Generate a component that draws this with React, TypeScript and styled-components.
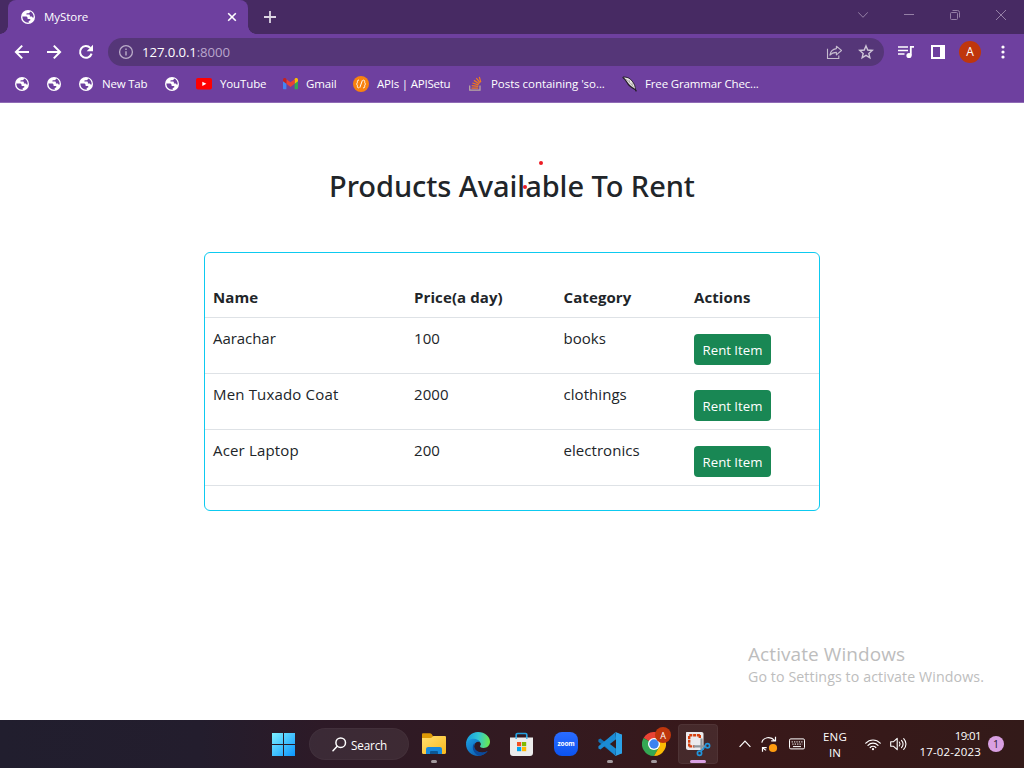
import React from "react";
import styled, { createGlobalStyle } from "styled-components";

const GlobalStyle = createGlobalStyle`
  *, *::before, *::after { box-sizing: border-box; }
  html, body { margin: 0; padding: 0; overflow: hidden; }
  body { font-family: "Open Sans", "Noto Sans", sans-serif; background: #fff; }
  svg { display: block; flex: none; }
`;

const Desktop = styled.div`
  position: relative;
  width: 1024px;
  height: 768px;
  display: flex;
  flex-direction: column;
  overflow: hidden;
`;

/* ---------- Browser chrome ---------- */

const Browser = styled.header`
  flex: none;
  height: 103px;
  background: #6e409f;
  border-bottom: 1px solid #8f6bb5;
  color: #fff;
`;

const TabStrip = styled.div`
  display: flex;
  height: 34px;
  padding-left: 8px;
  background: #472a63;
`;

const Tab = styled.div`
  position: relative;
  display: flex;
  align-items: center;
  width: 240px;
  padding: 0 8px 0 13px;
  border-radius: 8px 8px 0 0;
  background: #6e409f;

  &::before,
  &::after {
    content: "";
    position: absolute;
    bottom: 0;
    width: 8px;
    height: 8px;
  }
  &::before {
    left: -8px;
    background: radial-gradient(circle at 0 0, transparent 7.5px, #6e409f 8px);
  }
  &::after {
    right: -8px;
    background: radial-gradient(circle at 100% 0, transparent 7.5px, #6e409f 8px);
  }
`;

const TabTitle = styled.span`
  flex: 1;
  margin-left: 9px;
  padding-bottom: 2px;
  font-size: 11.5px;
  letter-spacing: -0.05px;
`;

const NewTabButton = styled.div`
  display: grid;
  place-items: center;
  width: 28px;
  margin-left: 8px;
`;

const WindowControls = styled.div`
  display: flex;
  height: 29px;
  margin-left: auto;
`;

const WindowButton = styled.div`
  display: grid;
  place-items: center;
  width: 46px;
`;

const Toolbar = styled.div`
  display: flex;
  align-items: center;
  height: 36px;
  padding: 0 6px;
`;

const ToolButton = styled.div`
  display: grid;
  place-items: center;
  width: 32px;
  height: 28px;
`;

const Omnibox = styled.div`
  display: flex;
  align-items: center;
  width: 776px;
  height: 28px;
  margin: 0 6px;
  padding: 0 2px 0 10px;
  border-radius: 14px;
  background: #553678;
`;

const Url = styled.span`
  flex: 1;
  margin-left: 8px;
  font-size: 13.2px;
  letter-spacing: -0.1px;
`;

const Port = styled.span`
  color: #b9a6cc;
`;

const Avatar = styled.div`
  display: grid;
  place-items: center;
  width: 22px;
  height: 22px;
  border-radius: 50%;
  background: #bf360c;
  font-size: 12px;
  line-height: 1;
`;

const BookmarkBar = styled.nav`
  display: flex;
  align-items: center;
  height: 29px;
  padding: 0 0 2px 15px;
`;

const Bookmark = styled.div<{ $width: number; $gap?: number }>`
  display: flex;
  align-items: center;
  flex: none;
  gap: ${(p) => p.$gap ?? 9}px;
  width: ${(p) => p.$width}px;
`;

const BookmarkLabel = styled.span<{ $spacing?: number }>`
  font-size: 11.5px;
  line-height: 16px;
  letter-spacing: ${(p) => p.$spacing ?? -0.12}px;
  white-space: nowrap;
`;

/* ---------- Page ---------- */

const Page = styled.main`
  position: relative;
  flex: 1;
  display: flex;
  flex-direction: column;
  align-items: center;
  background: #fff;
  color: #212529;
`;

const Title = styled.h2`
  margin: 63px 0 0;
  font: 500 29px/40px "Noto Sans", "Open Sans", sans-serif;
  letter-spacing: -0.05px;
`;

const InkDot = styled.i<{ $x: number; $y: number }>`
  position: absolute;
  left: ${(p) => p.$x}px;
  top: ${(p) => p.$y}px;
  width: 4px;
  height: 4px;
  border-radius: 50%;
  background: #ec1c24;
`;

const Card = styled.section`
  width: 616px;
  margin-top: 46px;
  padding: 24px 0;
  border: 1px solid #0dcaf0;
  border-radius: 6px;
`;

const Table = styled.table`
  width: 614px;
  table-layout: fixed;
  border-collapse: separate;
  border-spacing: 0;
  font-size: 15px;
  line-height: 24px;
`;

const Column = styled.col<{ $width: number }>`
  width: ${(p) => p.$width}px;
`;

const HeadCell = styled.th`
  height: 41px;
  padding: 8px;
  border-bottom: 1px solid #dee2e6;
  font-weight: 700;
  letter-spacing: 0.1px;
  text-align: left;
`;

const Cell = styled.td<{ $spacing?: number }>`
  height: 56px;
  padding: 8px;
  border-bottom: 1px solid #dee2e6;
  letter-spacing: ${(p) => p.$spacing ?? 0.05}px;
  vertical-align: top;
`;

const RentButton = styled.button`
  display: block;
  width: 77px;
  height: 31px;
  margin-top: 8px;
  padding: 1px 0 0;
  border: 0;
  border-radius: 4px;
  background: #198754;
  color: #fff;
  font: 400 13.2px/30px "Open Sans", sans-serif;
  letter-spacing: 0;
`;

const Watermark = styled.aside`
  position: absolute;
  left: 748px;
  top: 538px;
  color: #bdbdbd;
  white-space: nowrap;
`;

const WatermarkTitle = styled.div`
  font-size: 19px;
  line-height: 26px;
  letter-spacing: 0.08px;
`;

const WatermarkText = styled.div`
  font-size: 14.2px;
  line-height: 20px;
  letter-spacing: 0.1px;
`;

/* ---------- Taskbar ---------- */

const Taskbar = styled.footer`
  flex: none;
  display: flex;
  align-items: center;
  height: 48px;
  padding-left: 262px;
  background: linear-gradient(90deg, #211e2e 0, #231d2d 200px, #2d1a27 320px, #331a20 540px, #391819 740px, #331a19 1024px);
  color: #fff;
`;

const TaskSlot = styled.div<{ $active?: boolean }>`
  position: relative;
  display: grid;
  place-items: center;
  width: 40px;
  height: 40px;
  margin: 0 2px;
  border-radius: 4px;
  background: ${(p) => (p.$active ? "rgba(255,255,255,.075)" : "transparent")};
  box-shadow: ${(p) => (p.$active ? "inset 0 0 0 1px rgba(255,255,255,.05)" : "none")};
`;

const RunMark = styled.i<{ $active?: boolean }>`
  position: absolute;
  bottom: 1px;
  left: 50%;
  width: ${(p) => (p.$active ? 16 : 6)}px;
  height: 3px;
  border-radius: 2px;
  background: ${(p) => (p.$active ? "#d9a0e2" : "#a39a9e")};
  transform: translateX(-50%);
`;

const ProfileBadge = styled.span`
  position: absolute;
  left: 21px;
  top: 3px;
  display: grid;
  place-items: center;
  width: 16px;
  height: 16px;
  border-radius: 50%;
  background: #bf360c;
  font-size: 9px;
  line-height: 1;
`;

const SearchPill = styled.div`
  display: flex;
  align-items: center;
  gap: 4px;
  width: 100px;
  height: 32px;
  margin: 0 3px;
  padding: 1px 0 0 23px;
  border-radius: 16px;
  background: rgba(255, 255, 255, 0.07);
  box-shadow: inset 0 0 0 1px rgba(255, 255, 255, 0.03);
  font-size: 11.7px;
  letter-spacing: -0.15px;
`;

const Tray = styled.div`
  display: flex;
  align-items: center;
  margin: 0 20px 0 auto;
`;

const TrayIcon = styled.div<{ $width?: number }>`
  display: grid;
  place-items: center;
  width: ${(p) => p.$width ?? 24}px;
`;

const Language = styled.div`
  width: 44px;
  padding-top: 2px;
  font-size: 11.5px;
  line-height: 16px;
  letter-spacing: 0.15px;
  text-align: center;
`;

const Clock = styled.div`
  width: 74px;
  font-size: 11.5px;
  line-height: 16px;
  text-align: right;
`;

const Time = styled.div`
  letter-spacing: -0.6px;
`;

const DateText = styled.div`
  letter-spacing: 0.15px;
`;

const Notification = styled.div`
  width: 16px;
  height: 16px;
  margin-left: 7px;
  border-radius: 50%;
  background: #d9a0e2;
  color: #2b1a2e;
  font-size: 10.5px;
  line-height: 16px;
  text-align: center;
`;

/* ---------- Icons ---------- */

const GlobeIcon = () => (
  <svg width="14" height="14" viewBox="0 0 14 14">
    <circle cx="7" cy="7" r="7" fill="#fff" />
    <path
      d="M1.400 6.600h3.300c1.300 0 1.900.7 1.900 1.600v.7h2.100c.9 0 .9 1.300.3 1.700l-1.300.5v1.600c-3.900.1-6.400-2.500-6.300-6.100zM9 1.600c-.2.9-.5 1.600-1.600 1.600H6c-.4 0-.6.2-.6.6v.8h2.500c.8 0 1 .6 1 1.200v.8h1.500c.700 0 .9.500 1.100 1h1.200c.2-3-1.200-5.200-3.700-6z"
      fill="#6e409f"
    />
  </svg>
);

const YouTubeIcon = () => (
  <svg width="16" height="12" viewBox="0 0 16 12">
    <rect width="16" height="11.5" rx="2" fill="#f00" />
    <path d="M6.300 3.700v4.200l4.100-2.100z" fill="#fff" />
  </svg>
);

const GmailIcon = () => (
  <svg width="15" height="12" viewBox="0 0 15 12">
    <path d="M0 2.200v8.100c0 .6.400 1 1 1h2.400V4.600z" fill="#4285f4" />
    <path d="M15 2.200v8.100c0 .6-.4 1-1 1h-2.400V4.600z" fill="#34a853" />
    <path d="M11.600 1.200v4.600L15 3.300V1.900C15 .2 13.200-.4 12 .6z" fill="#fbbc04" />
    <path d="M3.400 1.200 7.500 4.300l4.100-3.100v4.600L7.500 8.900 3.400 5.800z" fill="#ea4335" />
    <path d="M0 1.900v1.400l3.400 2.500V1.200L3 .6C1.800-.4 0 .2 0 1.900z" fill="#c5221f" />
  </svg>
);

const ApiIcon = () => (
  <svg width="16" height="16" viewBox="0 0 16 16" fill="none" stroke="#fff" strokeWidth="1" strokeLinecap="round">
    <circle cx="8" cy="8" r="8" fill="#f9820f" stroke="none" />
    <path d="M5.600 4.100c-1.100 0-1.200.7-1.200 1.600 0 1.200-.1 1.800-.9 2.300.8.500.9 1.100.9 2.300 0 .9.100 1.600 1 1.600M10.600 4.100c1 0 1.100.7 1.100 1.600 0 1.200.1 1.800.9 2.300-.8.500-.9 1.100-.9 2.300 0 .9-.1 1.600-1.200 1.600M9.300 4.600 6.900 11.400" />
  </svg>
);

const StackIcon = () => (
  <svg width="13" height="15" viewBox="0 0 13 15" fill="none">
    <path d="M.7 9.600v4.500h10.300V9.600" stroke="#bcaaa4" strokeWidth="1.200" />
    <path d="M2.500 12h6.700M2.700 9.600l6.600.7M3.400 7l6.200 1.900M4.900 4.400l5.400 3.400M7.300 2.200l3.900 4.700M10.300.8l1.500 5.400" stroke="#f07a20" strokeWidth="1.250" />
  </svg>
);

const FeatherIcon = () => (
  <svg width="16" height="16" viewBox="0 0 16 16">
    <path d="M.8 1.200c2.800-.2 5.600.2 7.500 2 2.500 2.300 4.300 5.200 5 8.400l-.1 2C10.300 12 7.500 10.400 5.900 7.800 4.500 5.500 3 2.800.8 1.200z" fill="#e9e6e2" />
    <path d="M.6 1.200c2.200 1.400 3.700 4 5.200 6.400 1.900 2.900 4.800 4.500 7.600 6.100l1 1.700" stroke="#231d26" strokeWidth="1.300" fill="none" />
    <path d="M1 1c2.800-.1 5.600.5 7.400 2.200 2.500 2.300 4.300 5.200 4.900 8.400v2" stroke="#231d26" strokeWidth=".9" fill="none" />
    <path d="M4 3.200c3 2.200 6 5.400 8.600 9.400M7 3.800l.7 2.700M10 6.700l.4 3" stroke="#7d767f" strokeWidth=".5" fill="none" />
  </svg>
);

const BackIcon = () => (
  <svg width="16" height="16" viewBox="0 0 16 16" fill="none" stroke="#fff" strokeWidth="2">
    <path d="M15 8H2.500M8.200 1.600 1.900 8l6.300 6.400" />
  </svg>
);

const ForwardIcon = () => (
  <svg width="16" height="16" viewBox="0 0 16 16" fill="none" stroke="#fff" strokeWidth="2">
    <path d="M1 8h12.500M7.800 1.600 14.100 8l-6.300 6.400" />
  </svg>
);

const ReloadIcon = () => (
  <svg width="16" height="16" viewBox="0 0 16 16">
    <path d="M13.600 9.600A5.900 5.900 0 1 1 12.300 3.900" fill="none" stroke="#fff" strokeWidth="2" />
    <path d="M15 .8v6.400H8.700z" fill="#fff" />
  </svg>
);

const InfoIcon = () => (
  <svg width="16" height="16" viewBox="0 0 16 16">
    <circle cx="8" cy="8" r="6.400" fill="none" stroke="#bbadc9" strokeWidth="1.300" />
    <path d="M7.300 7.200h1.400v4.200H7.300zM7.300 4.500h1.400v1.500H7.300z" fill="#bbadc9" />
  </svg>
);

const ShareIcon = () => (
  <svg width="16" height="16" viewBox="0 0 16 16" fill="none" stroke="#c5bbce" strokeWidth="1.100">
    <path d="M1.500 4.800v9.700h11.300v-3" />
    <path d="M10.400 2.200 15.500 6.500 10.400 10.800V8.400C7.600 8.400 5.600 9.100 3.900 11.100c.5-3.500 2.700-6 6.500-6.500z" strokeLinejoin="round" />
  </svg>
);

const StarIcon = () => (
  <svg width="16" height="16" viewBox="0 0 16 16" fill="none" stroke="#cfc6d8" strokeWidth="1.400">
    <path d="m8 1.900 1.750 4.150 4.500.38-3.420 2.950 1.030 4.380L8 11.430l-3.860 2.330 1.030-4.380L1.750 6.430l4.500-.38z" />
  </svg>
);

const PlaylistIcon = () => (
  <svg width="16" height="14" viewBox="0 0 16 14" fill="none" stroke="#fff">
    <path d="M0 1.900h10M0 5.500h10M0 9.100h6.500" strokeWidth="1.500" />
    <path d="M12.800 10.500V1.900H16" strokeWidth="1.800" />
    <circle cx="11" cy="10.500" r="2.600" fill="#fff" stroke="none" />
  </svg>
);

const SidePanelIcon = () => (
  <svg width="14" height="14" viewBox="0 0 14 14">
    <path d="M0 0h14v14H0zM2 2v10h7V2z" fill="#fff" fillRule="evenodd" />
  </svg>
);

const MoreIcon = () => (
  <svg width="5" height="14" viewBox="0 0 5 14" fill="#fff">
    <circle cx="3" cy="2" r="1.600" />
    <circle cx="3" cy="7" r="1.600" />
    <circle cx="3" cy="12" r="1.600" />
  </svg>
);

const StartIcon = () => (
  <svg width="24" height="24" viewBox="0 0 24 24">
    <defs>
      <linearGradient id="start" x1="0" y1="0" x2="1" y2="1">
        <stop offset="0" stopColor="#7df0ff" />
        <stop offset="1" stopColor="#0a95ff" />
      </linearGradient>
    </defs>
    <path d="M0 1h11v11H0zM12 1h11v11H12zM0 13h11v11H0zM12 13h11v11H12z" fill="url(#start)" />
  </svg>
);

const SearchIcon = () => (
  <svg width="15" height="15" viewBox="0 0 15 15" fill="none" stroke="#fff" strokeWidth="1.500" strokeLinecap="round">
    <circle cx="8.700" cy="5.700" r="4.800" />
    <path d="M5.200 9.300 1 13.800" />
  </svg>
);

const ExplorerIcon = () => (
  <svg width="24" height="24" viewBox="0 0 24 24">
    <defs>
      <linearGradient id="folder" x1="0" y1="0" x2="1" y2="1">
        <stop offset="0" stopColor="#ffdf70" />
        <stop offset="1" stopColor="#f8b91c" />
      </linearGradient>
    </defs>
    <path d="M0 2.500C0 1.700.5 1.200 1.200 1.200h6.600c.8 0 1.300.3 1.800.9l1.300 1.800V8H0z" fill="#dd9905" />
    <path d="M0 6h8.700c.8 0 1-.3 1.500-.9.600-.8 1-1.100 1.900-1.100h10.600c.8 0 1.300.5 1.300 1.200v15.600c0 .7-.5 1.200-1.200 1.200H1.200C.5 22 0 21.500 0 20.800z" fill="url(#folder)" />
    <path d="M4 22v-4.800c0-1.300.9-2.200 2.200-2.200h11.600c1.300 0 2.200.9 2.200 2.200V22z" fill="#1689dc" />
    <path d="M8 22v-1.600c0-.8.500-1.300 1.300-1.300h5.400c.8 0 1.300.5 1.300 1.300V22z" fill="#0c5794" />
  </svg>
);

const EdgeIcon = () => (
  <svg width="24" height="24" viewBox="0 0 24 24">
    <defs>
      <linearGradient id="edgeTop" x1="0" y1=".4" x2="1" y2=".5">
        <stop offset="0" stopColor="#159bdf" />
        <stop offset=".5" stopColor="#31c6d4" />
        <stop offset="1" stopColor="#6bea4b" />
      </linearGradient>
      <linearGradient id="edgeBase" x1="0" y1="0" x2="1" y2="1">
        <stop offset="0" stopColor="#1b9de2" />
        <stop offset="1" stopColor="#0a4ea5" />
      </linearGradient>
    </defs>
    <path d="M0 12C.2 5.200 5.300 0 12 0c7 0 12 4.600 12 9.700 0 3.700-2.800 6.200-6.400 6.200-2.900 0-4.100-1.100-3.400-2.100 1-1.100.8-2 .2-3C12.600 7.200 4 6.600 0 12z" fill="url(#edgeTop)" />
    <path d="M0 12c1.800-6.100 11.600-7 14.200-1.500-2.200-1.700-6.100.2-6.100 4 0 5.100 7.600 8.300 13.600 4.600C19.300 22.200 16 24 12 24 5.400 24 0 18.600 0 12z" fill="url(#edgeBase)" />
    <path d="M8.700 10.800c-3.700 3.200-1.900 10.900 4.400 13.100 3.900-.2 6.800-2.100 8.600-4.800-5.600 3.100-13.200.5-13.600-4.600 0-1.400.2-2.500.6-3.700z" fill="#0b4a9c" />
  </svg>
);

const StoreIcon = () => (
  <svg width="24" height="24" viewBox="0 0 24 24">
    <path d="M6.200 7V2.800c0-.8.500-1.300 1.300-1.300h8c.8 0 1.300.5 1.300 1.300V7" fill="none" stroke="#23a2e2" strokeWidth="1.700" />
    <path d="M0 5.500h23v15.400c0 1.800-1.200 3-3 3H3c-1.800 0-3-1.200-3-3z" fill="#ececec" />
    <path d="M5.400 5.500H7v1.300H5.400zM16 5.500h1.600v1.300H16z" fill="#23a2e2" />
    <path d="M7 10h4.200v4.200H7z" fill="#f25022" />
    <path d="M12 10h4.200v4.200H12z" fill="#7fba00" />
    <path d="M7 15h4.200v4.200H7z" fill="#00a4ef" />
    <path d="M12 15h4.200v4.200H12z" fill="#ffb900" />
  </svg>
);

const ZoomLogo = styled.div`
  width: 24px;
  height: 24px;
  border-radius: 8px;
  background: linear-gradient(#2a6cff, #0b53f0);
  font: 700 6.500px/23px "Open Sans", sans-serif;
  letter-spacing: -0.1px;
  text-align: center;
`;

const CodeIcon = () => (
  <svg width="24" height="24" viewBox="0 0 24 24">
    <path d="M17.500.3 6.900 10 2.400 6.500.4 7.500v2.200l16.800 13.800.8-6.600z" fill="#1274b8" />
    <path d="M17.500 23.700 6.900 14l-4.500 3.500-2-1v-2.200L17.200.5l.8 6.600z" fill="#1b8bd4" />
    <path d="M17.500 0 24 2.800v18.400L17.500 24c-.4 0-.8-.2-1.100-.5.7.5 1.600 0 1.600-.9V1.400c0-.9-.9-1.400-1.600-.9.3-.3.7-.5 1.100-.5z" fill="#33a9ee" />
    <path d="M18 7.200 11.800 12l6.200 4.800v6l6-1.600V2.800L18 1z" fill="#2ba2e8" />
    <path d="M18 7.200v9.600L11.800 12z" fill="#341b20" />
  </svg>
);

const ChromeIcon = () => (
  <svg width="24" height="24" viewBox="0 0 24 24">
    <path d="M12 12 1.600 6a12 12 0 0 1 20.800 0z" fill="#ea4335" />
    <path d="M12 12 1.600 6a12 12 0 0 0 10.400 18l5.200-9z" fill="#34a853" />
    <path d="M12 6h10.400A12 12 0 0 1 12 24l5.200-9z" fill="#fbbc04" />
    <circle cx="12" cy="12" r="6" fill="#fff" />
    <circle cx="12" cy="12" r="4.700" fill="#3b82f0" />
  </svg>
);

const SnipIcon = () => (
  <svg width="26" height="26" viewBox="0 0 26 26" fill="none">
    <path d="M1.500 1h15c1.200 0 2 .8 2 2v16H3.200C1.800 19 1 18.200 1 16.800V1.500z" fill="#ebebee" />
    <path d="M4.200 15.500V4.200H15" stroke="#d8400e" strokeWidth="2.400" strokeDasharray="3 .8" />
    <path d="M4.200 15.400h5.500M14.800 4v3.500" stroke="#d8400e" strokeWidth="2.400" strokeDasharray="3 .8" />
    <path d="M16.500 7.500v11.700M8.500 15.300h12" stroke="#8f969c" strokeWidth="2.200" />
    <circle cx="22.500" cy="14.700" r="2.100" stroke="#2196dd" strokeWidth="1.700" />
    <circle cx="14.500" cy="22.300" r="2.100" stroke="#2196dd" strokeWidth="1.700" />
    <path d="m19.500 16.200-3.500 4" stroke="#2196dd" strokeWidth="1.500" />
  </svg>
);

const ChevronUpIcon = () => (
  <svg width="12" height="8" viewBox="0 0 12 8" fill="none" stroke="#fff" strokeWidth="1.200">
    <path d="M.6 6.800 6 1.200l5.400 5.600" />
  </svg>
);

const SyncIcon = () => (
  <svg width="18" height="18" viewBox="0 0 18 18" fill="none" stroke="#fff" strokeWidth="1.200">
    <path d="M1.800 7.600C3 2.400 10.500.6 14.700 5.600M15.500 1.700v4.200h-4.300M6.200 15.300c-1.200-.5-2.200-1.100-3-2.300M2.500 16.700v-4.100h4.200" />
    <circle cx="13" cy="13" r="4.100" fill="#ff9c0f" stroke="none" />
  </svg>
);

const KeyboardIcon = () => (
  <svg width="16" height="12" viewBox="0 0 16 12" fill="none" stroke="#fff">
    <rect x=".5" y=".9" width="15" height="10" rx="1.300" />
    <path d="M2.600 3.900h11M3.300 6.100h10" strokeDasharray="1.300 1.100" />
    <path d="M4 8.600h8" />
  </svg>
);

const WifiIcon = () => (
  <svg width="16" height="13" viewBox="0 0 16 13" fill="none" stroke="#fff" strokeWidth="1.200" strokeLinecap="round">
    <path d="M.8 5.200c4-4.300 10.400-4.300 14.400 0M3 7.400c2.800-3 7.200-3 10 0M5.200 9.500c1.600-1.700 4-1.700 5.600 0" />
    <circle cx="8" cy="11.200" r="1.100" fill="#fff" stroke="none" />
  </svg>
);

const SpeakerIcon = () => (
  <svg width="17" height="14" viewBox="0 0 17 14" fill="none" stroke="#fff" strokeWidth="1.100" strokeLinecap="round" strokeLinejoin="round">
    <path d="M.7 4.800h2.600L7.200 1.300v11.400L3.300 9.200H.7zM9.300 5c.9 1.200.9 2.800 0 4M11.500 3.300c1.900 2.200 1.900 5.200 0 7.400M13.700 1.600c3 3.200 3 7.600 0 10.800" />
  </svg>
);

/* ---------- Data ---------- */

const products = [
  { name: "Aarachar", price: 100, category: "books" },
  { name: "Men Tuxado Coat", price: 2000, category: "clothings" },
  { name: "Acer Laptop", price: 200, category: "electronics" },
];

function BrowserChrome() {
  return (
    <Browser>
      <TabStrip>
        <Tab>
          <GlobeIcon />
          <TabTitle>MyStore</TabTitle>
          <svg width="16" height="16" viewBox="0 0 16 16" stroke="#fff" strokeWidth="1.600">
            <path d="m4.200 4.200 7.600 7.600M11.800 4.200l-7.600 7.600" />
          </svg>
        </Tab>
        <NewTabButton>
          <svg width="12" height="12" viewBox="0 0 12 12" stroke="#ddd6e3" strokeWidth="1.800">
            <path d="M6 0v12M0 6h12" />
          </svg>
        </NewTabButton>
        <WindowControls>
          <WindowButton>
            <svg width="10" height="6" viewBox="0 0 10 6" fill="none" stroke="#9580a6">
              <path d="m.2.300 4.800 5 4.800-5" />
            </svg>
          </WindowButton>
          <WindowButton>
            <svg width="10" height="1" viewBox="0 0 10 1">
              <path d="M0 0h10v1H0z" fill="#9580a6" />
            </svg>
          </WindowButton>
          <WindowButton>
            <svg width="10" height="10" viewBox="0 0 10 10" fill="none" stroke="#9580a6">
              <rect x=".5" y="2.500" width="7" height="7" rx="1" />
              <path d="M2.500.5h5a2 2 0 0 1 2 2v5" />
            </svg>
          </WindowButton>
          <WindowButton>
            <svg width="10" height="10" viewBox="0 0 10 10" stroke="#9580a6">
              <path d="m0 0 10 10M10 0 0 10" />
            </svg>
          </WindowButton>
        </WindowControls>
      </TabStrip>
      <Toolbar>
        <ToolButton><BackIcon /></ToolButton>
        <ToolButton><ForwardIcon /></ToolButton>
        <ToolButton><ReloadIcon /></ToolButton>
        <Omnibox>
          <InfoIcon />
          <Url>
            127.0.0.1<Port>:8000</Port>
          </Url>
          <ToolButton><ShareIcon /></ToolButton>
          <ToolButton><StarIcon /></ToolButton>
        </Omnibox>
        <ToolButton><PlaylistIcon /></ToolButton>
        <ToolButton><SidePanelIcon /></ToolButton>
        <ToolButton><Avatar>A</Avatar></ToolButton>
        <ToolButton><MoreIcon /></ToolButton>
      </Toolbar>
      <BookmarkBar>
        <Bookmark $width={32}><GlobeIcon /></Bookmark>
        <Bookmark $width={32}><GlobeIcon /></Bookmark>
        <Bookmark $width={86}>
          <GlobeIcon />
          <BookmarkLabel $spacing={-0.2}>New Tab</BookmarkLabel>
        </Bookmark>
        <Bookmark $width={31}><GlobeIcon /></Bookmark>
        <Bookmark $width={87} $gap={8}>
          <YouTubeIcon />
          <BookmarkLabel>YouTube</BookmarkLabel>
        </Bookmark>
        <Bookmark $width={70} $gap={8}>
          <GmailIcon />
          <BookmarkLabel>Gmail</BookmarkLabel>
        </Bookmark>
        <Bookmark $width={116} $gap={8}>
          <ApiIcon />
          <BookmarkLabel $spacing={-0.22}>APIs | APISetu</BookmarkLabel>
        </Bookmark>
        <Bookmark $width={153}>
          <StackIcon />
          <BookmarkLabel $spacing={-0.05}>Posts containing 'so...</BookmarkLabel>
        </Bookmark>
        <Bookmark $width={150} $gap={7}>
          <FeatherIcon />
          <BookmarkLabel $spacing={-0.15}>Free Grammar Chec...</BookmarkLabel>
        </Bookmark>
      </BookmarkBar>
    </Browser>
  );
}

function ProductTable() {
  return (
    <Card>
      <Table>
        <colgroup>
          <Column $width={201} />
          <Column $width={149.5} />
          <Column $width={130.5} />
          <Column $width={133} />
        </colgroup>
        <thead>
          <tr>
            <HeadCell>Name</HeadCell>
            <HeadCell>Price(a day)</HeadCell>
            <HeadCell>Category</HeadCell>
            <HeadCell>Actions</HeadCell>
          </tr>
        </thead>
        <tbody>
          {products.map((product) => (
            <tr key={product.name}>
              <Cell $spacing={product.name.includes(" ") ? 0.17 : -0.05}>{product.name}</Cell>
              <Cell>{product.price}</Cell>
              <Cell>{product.category}</Cell>
              <Cell>
                <RentButton>Rent Item</RentButton>
              </Cell>
            </tr>
          ))}
        </tbody>
      </Table>
    </Card>
  );
}

function WindowsTaskbar() {
  return (
    <Taskbar>
      <TaskSlot><StartIcon /></TaskSlot>
      <SearchPill>
        <SearchIcon />
        Search
      </SearchPill>
      <TaskSlot><ExplorerIcon /><RunMark /></TaskSlot>
      <TaskSlot><EdgeIcon /></TaskSlot>
      <TaskSlot><StoreIcon /></TaskSlot>
      <TaskSlot><ZoomLogo>zoom</ZoomLogo></TaskSlot>
      <TaskSlot><CodeIcon /><RunMark /></TaskSlot>
      <TaskSlot>
        <ChromeIcon />
        <ProfileBadge>A</ProfileBadge>
        <RunMark />
      </TaskSlot>
      <TaskSlot $active>
        <SnipIcon />
        <RunMark $active />
      </TaskSlot>
      <Tray>
        <TrayIcon><ChevronUpIcon /></TrayIcon>
        <TrayIcon><SyncIcon /></TrayIcon>
        <TrayIcon $width={32}><KeyboardIcon /></TrayIcon>
        <Language>
          <div>ENG</div>
          <div>IN</div>
        </Language>
        <TrayIcon $width={32}><WifiIcon /></TrayIcon>
        <TrayIcon $width={18}><SpeakerIcon /></TrayIcon>
        <Clock>
          <Time>19:01</Time>
          <DateText>17-02-2023</DateText>
        </Clock>
        <Notification>1</Notification>
      </Tray>
    </Taskbar>
  );
}

export default function App() {
  return (
    <>
      <GlobalStyle />
      <Desktop>
        <BrowserChrome />
        <Page>
          <Title>Products Available To Rent</Title>
          <InkDot $x={539} $y={58} />
          <InkDot $x={523} $y={82} />
          <ProductTable />
          <Watermark>
            <WatermarkTitle>Activate Windows</WatermarkTitle>
            <WatermarkText>Go to Settings to activate Windows.</WatermarkText>
          </Watermark>
        </Page>
        <WindowsTaskbar />
      </Desktop>
    </>
  );
}
